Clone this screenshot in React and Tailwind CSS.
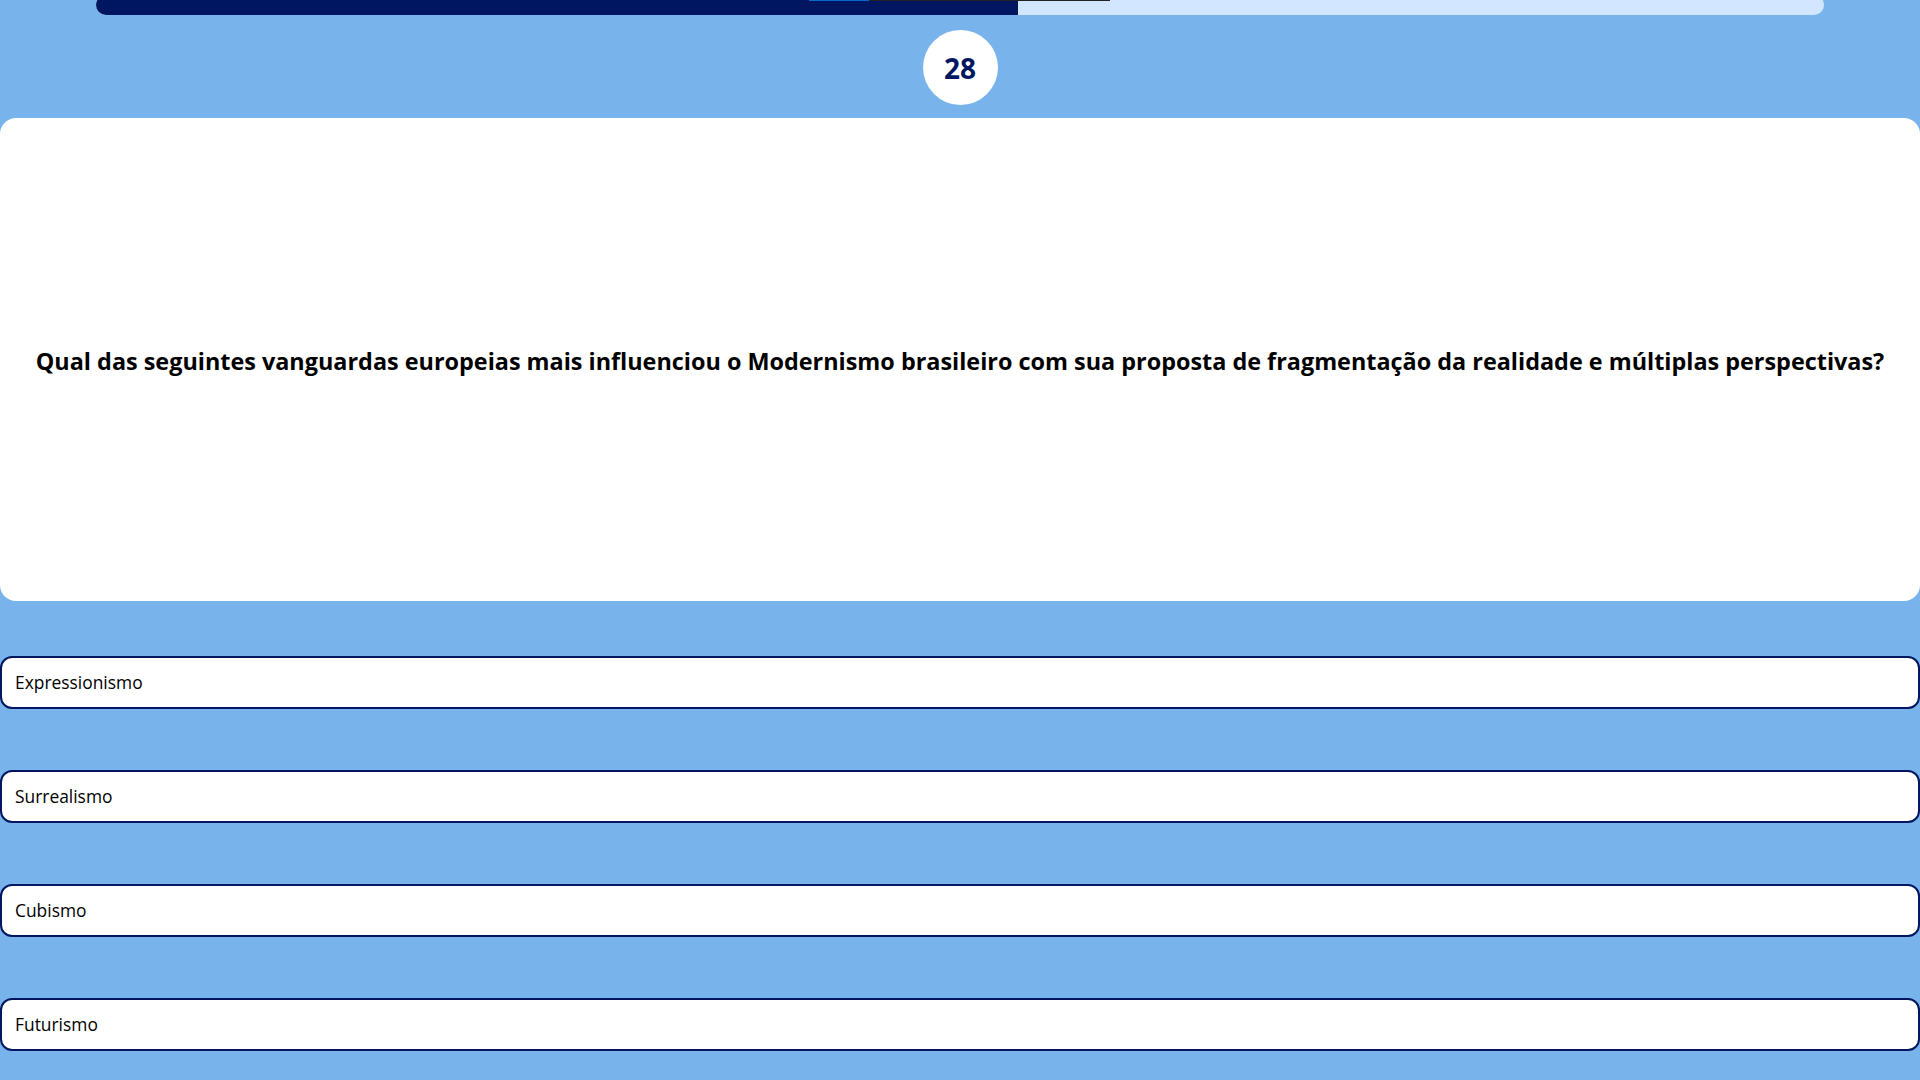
import React from 'react';

const options = ['Expressionismo', 'Surrealismo', 'Cubismo', 'Futurismo'];

export default function App() {
  const progress = 922;

  return (
    <div className="min-h-screen bg-[#78b4eb] font-['Open_Sans',sans-serif] overflow-hidden">
      {/* progress bar */}
      <div className="relative flow-root">
        <div className="w-[1728px] mx-auto h-[20px] -mt-[5px] rounded-full bg-[#d2e7ff] overflow-hidden">
          <div className="h-full bg-[#001660]" style={{ width: `${progress}px` }}></div>
        </div>
        <div className="absolute top-0 left-[809px] w-[60px] h-[1px] bg-[#0a66c8]"></div>
        <div className="absolute top-0 left-[869px] w-[241px] h-[1px] bg-[#222222]"></div>
      </div>

      {/* question number */}
      <div className="mt-[15px] mx-auto w-[75px] h-[75px] rounded-full bg-white flex items-center justify-center">
        <span className="text-[28px] font-bold text-[#001660] leading-none">28</span>
      </div>

      {/* question card */}
      <div className="mt-[13px] h-[483px] rounded-[16px] bg-white flex items-center justify-center px-4 pt-[4px]">
        <h2 className="text-[23.4px] font-bold text-black text-center whitespace-nowrap">
          Qual das seguintes vanguardas europeias mais influenciou o Modernismo brasileiro com sua proposta de fragmentação da realidade e múltiplas perspectivas?
        </h2>
      </div>

      {/* options */}
      <div className="mt-[55px] flex flex-col gap-[61px]">
        {options.map((opt) => (
          <button
            key={opt}
            className="h-[53px] w-full bg-white border-2 border-[#001660] rounded-[12px] px-[13px] flex items-center text-left text-[17.4px] text-black"
          >
            {opt}
          </button>
        ))}
      </div>
    </div>
  );
}
